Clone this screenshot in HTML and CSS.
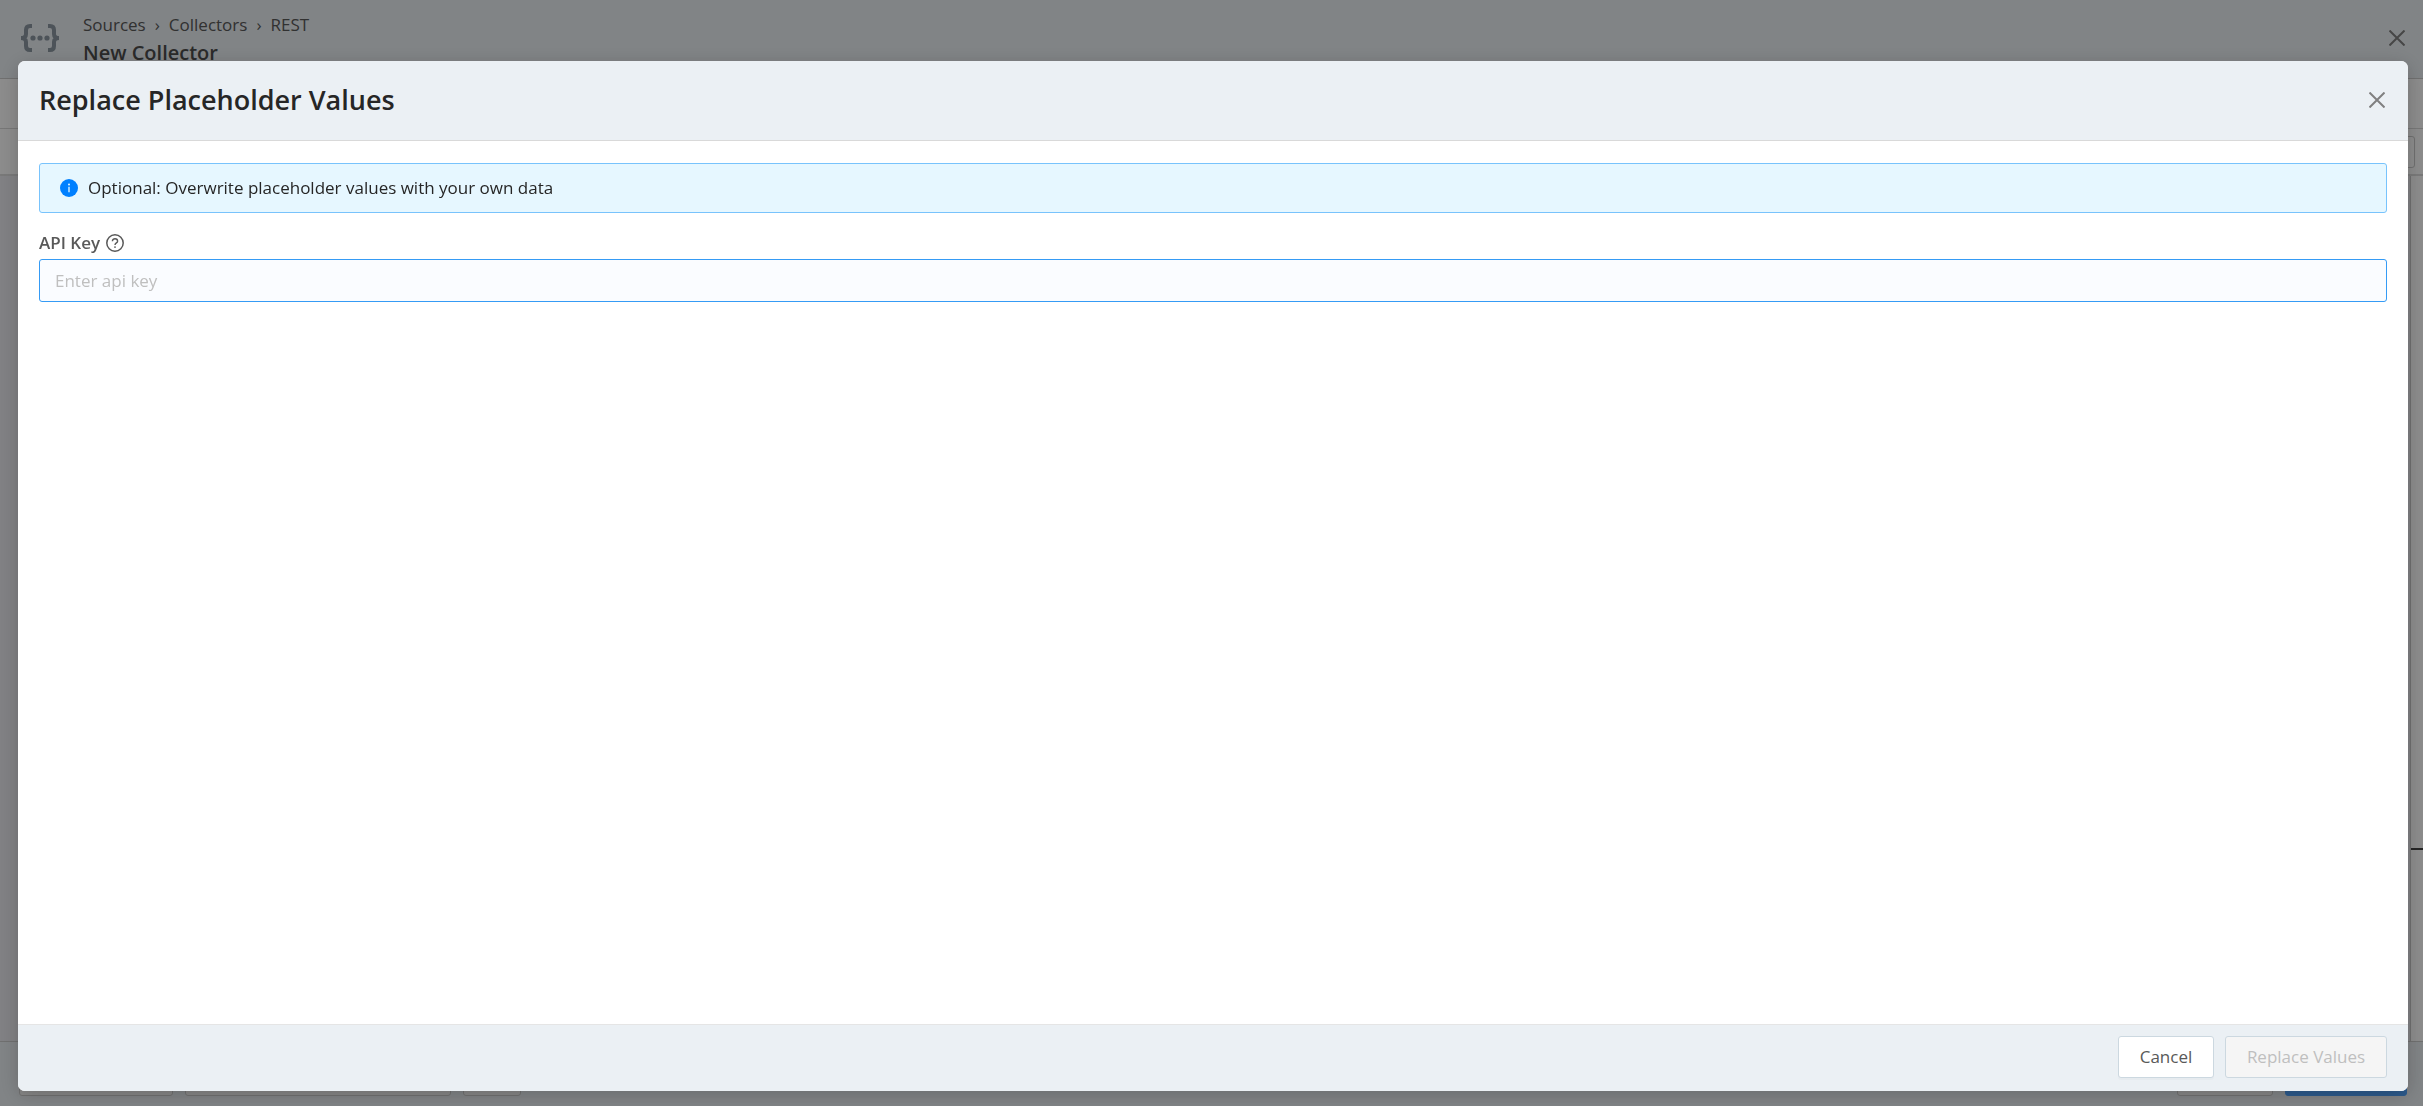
FILE: index.html
```html
<!DOCTYPE html>
<html lang="en">
<head>
<meta charset="utf-8">
<meta name="viewport" content="width=device-width, initial-scale=1">
<title>New Collector</title>
<link rel="stylesheet" href="styles.css">
</head>
<body>
<div class="page" inert>
  <header class="page-header">
    <svg class="collector-icon" viewBox="0 0 40 28" fill="none" stroke="currentColor" stroke-width="4" aria-hidden="true">
      <path d="M12 2H10Q6 2 6 6V10Q6 14 1 14Q6 14 6 18V22Q6 26 10 26H12M28 2H30Q34 2 34 6V10Q34 14 39 14Q34 14 34 18V22Q34 26 30 26H28"/>
      <g fill="currentColor" stroke="none"><circle cx="13" cy="14" r="2.6"/><circle cx="20" cy="14" r="2.6"/><circle cx="27" cy="14" r="2.6"/></g>
    </svg>
    <div class="page-titles">
      <nav class="breadcrumb" aria-label="Breadcrumb"><a href="#">Sources</a><span>›</span><a href="#">Collectors</a><span>›</span><a href="#">REST</a></nav>
      <h1>New Collector</h1>
    </div>
    <button class="close page-close" type="button" aria-label="Close page"><svg viewBox="0 0 16 16"><path d="M0.5 0.5l15 15M15.5 0.5l-15 15"/></svg></button>
  </header>
  <div class="tab-strip"></div>
  <div class="toolbar"><div class="toolbar-box"></div></div>
  <main class="workspace"><div class="side-panel"><div class="marks"></div><div class="rule"></div></div></main>
  <footer class="page-footer">
    <div class="ghost ghost-wide"></div><div class="ghost ghost-long"></div><div class="ghost ghost-small"></div>
    <div class="ghost ghost-cancel"></div><div class="ghost ghost-primary"></div>
  </footer>
</div>
<div class="overlay">
  <section class="modal" role="dialog" aria-modal="true" aria-labelledby="modal-title">
    <header class="modal-header">
      <h2 id="modal-title">Replace Placeholder Values</h2>
      <button class="close" type="button" aria-label="Close"><svg viewBox="0 0 16 16"><path d="M0.5 0.5l15 15M15.5 0.5l-15 15"/></svg></button>
    </header>
    <div class="modal-body">
      <div class="alert" role="status">
        <svg class="round-icon" viewBox="0 0 18 18" aria-hidden="true"><circle cx="9" cy="9" r="9" fill="#0080ff"/><circle cx="9" cy="5.4" r="1" fill="#e6f7ff"/><path d="M9 7.8v5.4" stroke="#e6f7ff" stroke-width="1.3"/></svg>
        <span>Optional: Overwrite placeholder values with your own data</span>
      </div>
      <div class="field">
        <div class="field-label">
          <label for="api-key">API Key</label>
          <svg class="round-icon" viewBox="0 0 18 18" fill="none" stroke="currentColor" aria-hidden="true"><circle cx="9" cy="9" r="8.2" stroke-width="1.5"/><path d="M6.4 7.2C6.4 3.9 11.6 3.9 11.6 7.2C11.6 9 9 8.9 9 11.1" stroke-width="1.4"/><circle cx="9" cy="13.1" r=".9" fill="currentColor" stroke="none"/></svg>
        </div>
        <input id="api-key" type="text" placeholder="Enter api key">
      </div>
    </div>
    <footer class="modal-footer">
      <button class="btn" type="button">Cancel</button>
      <button class="btn btn-wide" type="button" disabled>Replace Values</button>
    </footer>
  </section>
</div>
</body>
</html>
```
FILE: styles.css
```css
* { box-sizing: border-box; }
body { margin: 0; font-family: "Open Sans", "Noto Sans", sans-serif; font-size: 17px; line-height: 26px; color: #262626; }
h1, h2 { margin: 0; font-weight: 600; }
button, input { font: inherit; }
.page { display: flex; flex-direction: column; height: 100vh; overflow: hidden; background: #fff; }
.page-header { display: flex; align-items: flex-start; flex: none; height: 79px; padding: 12px 18px 0 20px; background: #ebf0f4; border-bottom: 1px solid #ccc; }
.collector-icon { flex: none; width: 40px; height: 28px; margin: 12px 23px 0 0; color: #8c98a2; }
.page-titles { flex: 1; }
.breadcrumb { display: flex; gap: 9px; color: #595959; }
.breadcrumb a { color: #595959; text-decoration: none; }
h1 { font-size: 20px; line-height: 30px; color: #4d4d4d; }
.close { display: flex; flex: none; padding: 0; border: 0; background: none; color: #808080; }
.close svg { width: 16px; height: 16px; fill: none; stroke: currentColor; stroke-width: 2; }
.page-close { margin-top: 18px; }
.tab-strip { flex: none; height: 50px; border-bottom: 1px solid #d9d9d9; }
.toolbar { display: flex; justify-content: flex-end; align-items: center; flex: none; height: 47px; padding-right: 8px; border-bottom: 2px solid #ddd; }
.toolbar-box { width: 60px; height: 32px; border: 1px solid #ccc; border-radius: 3px; }
.workspace { display: flex; justify-content: flex-end; flex: 1; background: #ebebf0; }
.side-panel { display: flex; flex-direction: column; width: 13px; border-left: 1px solid #ccc; background: #fff; }
.marks { flex: none; height: 672px; }
.rule { flex: none; height: 2px; background: #444; }
.page-footer { display: flex; gap: 12px; flex: none; height: 65px; padding: 11px 16px 0 19px; background: #ebf0f4; border-top: 1px solid #ccc; }
.ghost { height: 43px; border: 1px solid #ccc; border-radius: 3px; background: #f5f5f5; }
.ghost-wide { width: 154px; }
.ghost-long { width: 266px; }
.ghost-small { width: 58px; }
.ghost-cancel { width: 96px; margin-left: auto; }
.ghost-primary { width: 122px; background: #50a4ff; border-color: #50a4ff; }
.overlay { position: fixed; inset: 0; display: flex; padding: 61px 15px 15px 18px; background: rgba(0, 0, 0, .45); }
.modal { display: flex; flex: 1; flex-direction: column; min-width: 0; overflow: hidden; border-radius: 7px; background: #fff; box-shadow: 0 4px 20px rgba(0, 0, 0, .2); }
.modal-header { display: flex; align-items: center; justify-content: space-between; height: 80px; padding: 0 23px 2px 21px; background: #ebf0f4; border-bottom: 1px solid #d9d9d9; }
h2 { font-size: 27px; line-height: 38px; }
.modal-body { flex: 1; padding: 22px 21px; }
.alert { display: flex; align-items: center; gap: 10px; height: 50px; padding: 0 20px; border: 1px solid #78c3fc; border-radius: 3px; background: #e6f7ff; }
.round-icon { flex: none; width: 18px; height: 18px; }
.field { margin-top: 17px; }
.field-label { display: flex; align-items: center; gap: 6px; margin-bottom: 3px; color: #595959; font-weight: 600; }
.field input { display: block; width: 100%; height: 43px; padding: 0 15px; border: 1px solid #359bf5; border-radius: 3px; outline: 0; background: #fafcff; color: #262626; }
.field input::placeholder { color: #bfbfbf; opacity: 1; }
.modal-footer { display: flex; justify-content: flex-end; gap: 11px; height: 67px; padding: 11px 21px 0; background: #ebf0f4; border-top: 1px solid #e5e5e5; }
.btn { min-width: 96px; height: 42px; padding: 0 16px; border: 1px solid #ccd8e0; border-radius: 3px; background: #fff; color: #595959; box-shadow: 0 2px 0 rgba(0, 0, 0, .02); }
.btn-wide { min-width: 162px; }
.btn:disabled { background: #f5f5f5; color: #bfbfbf; box-shadow: none; }
```
